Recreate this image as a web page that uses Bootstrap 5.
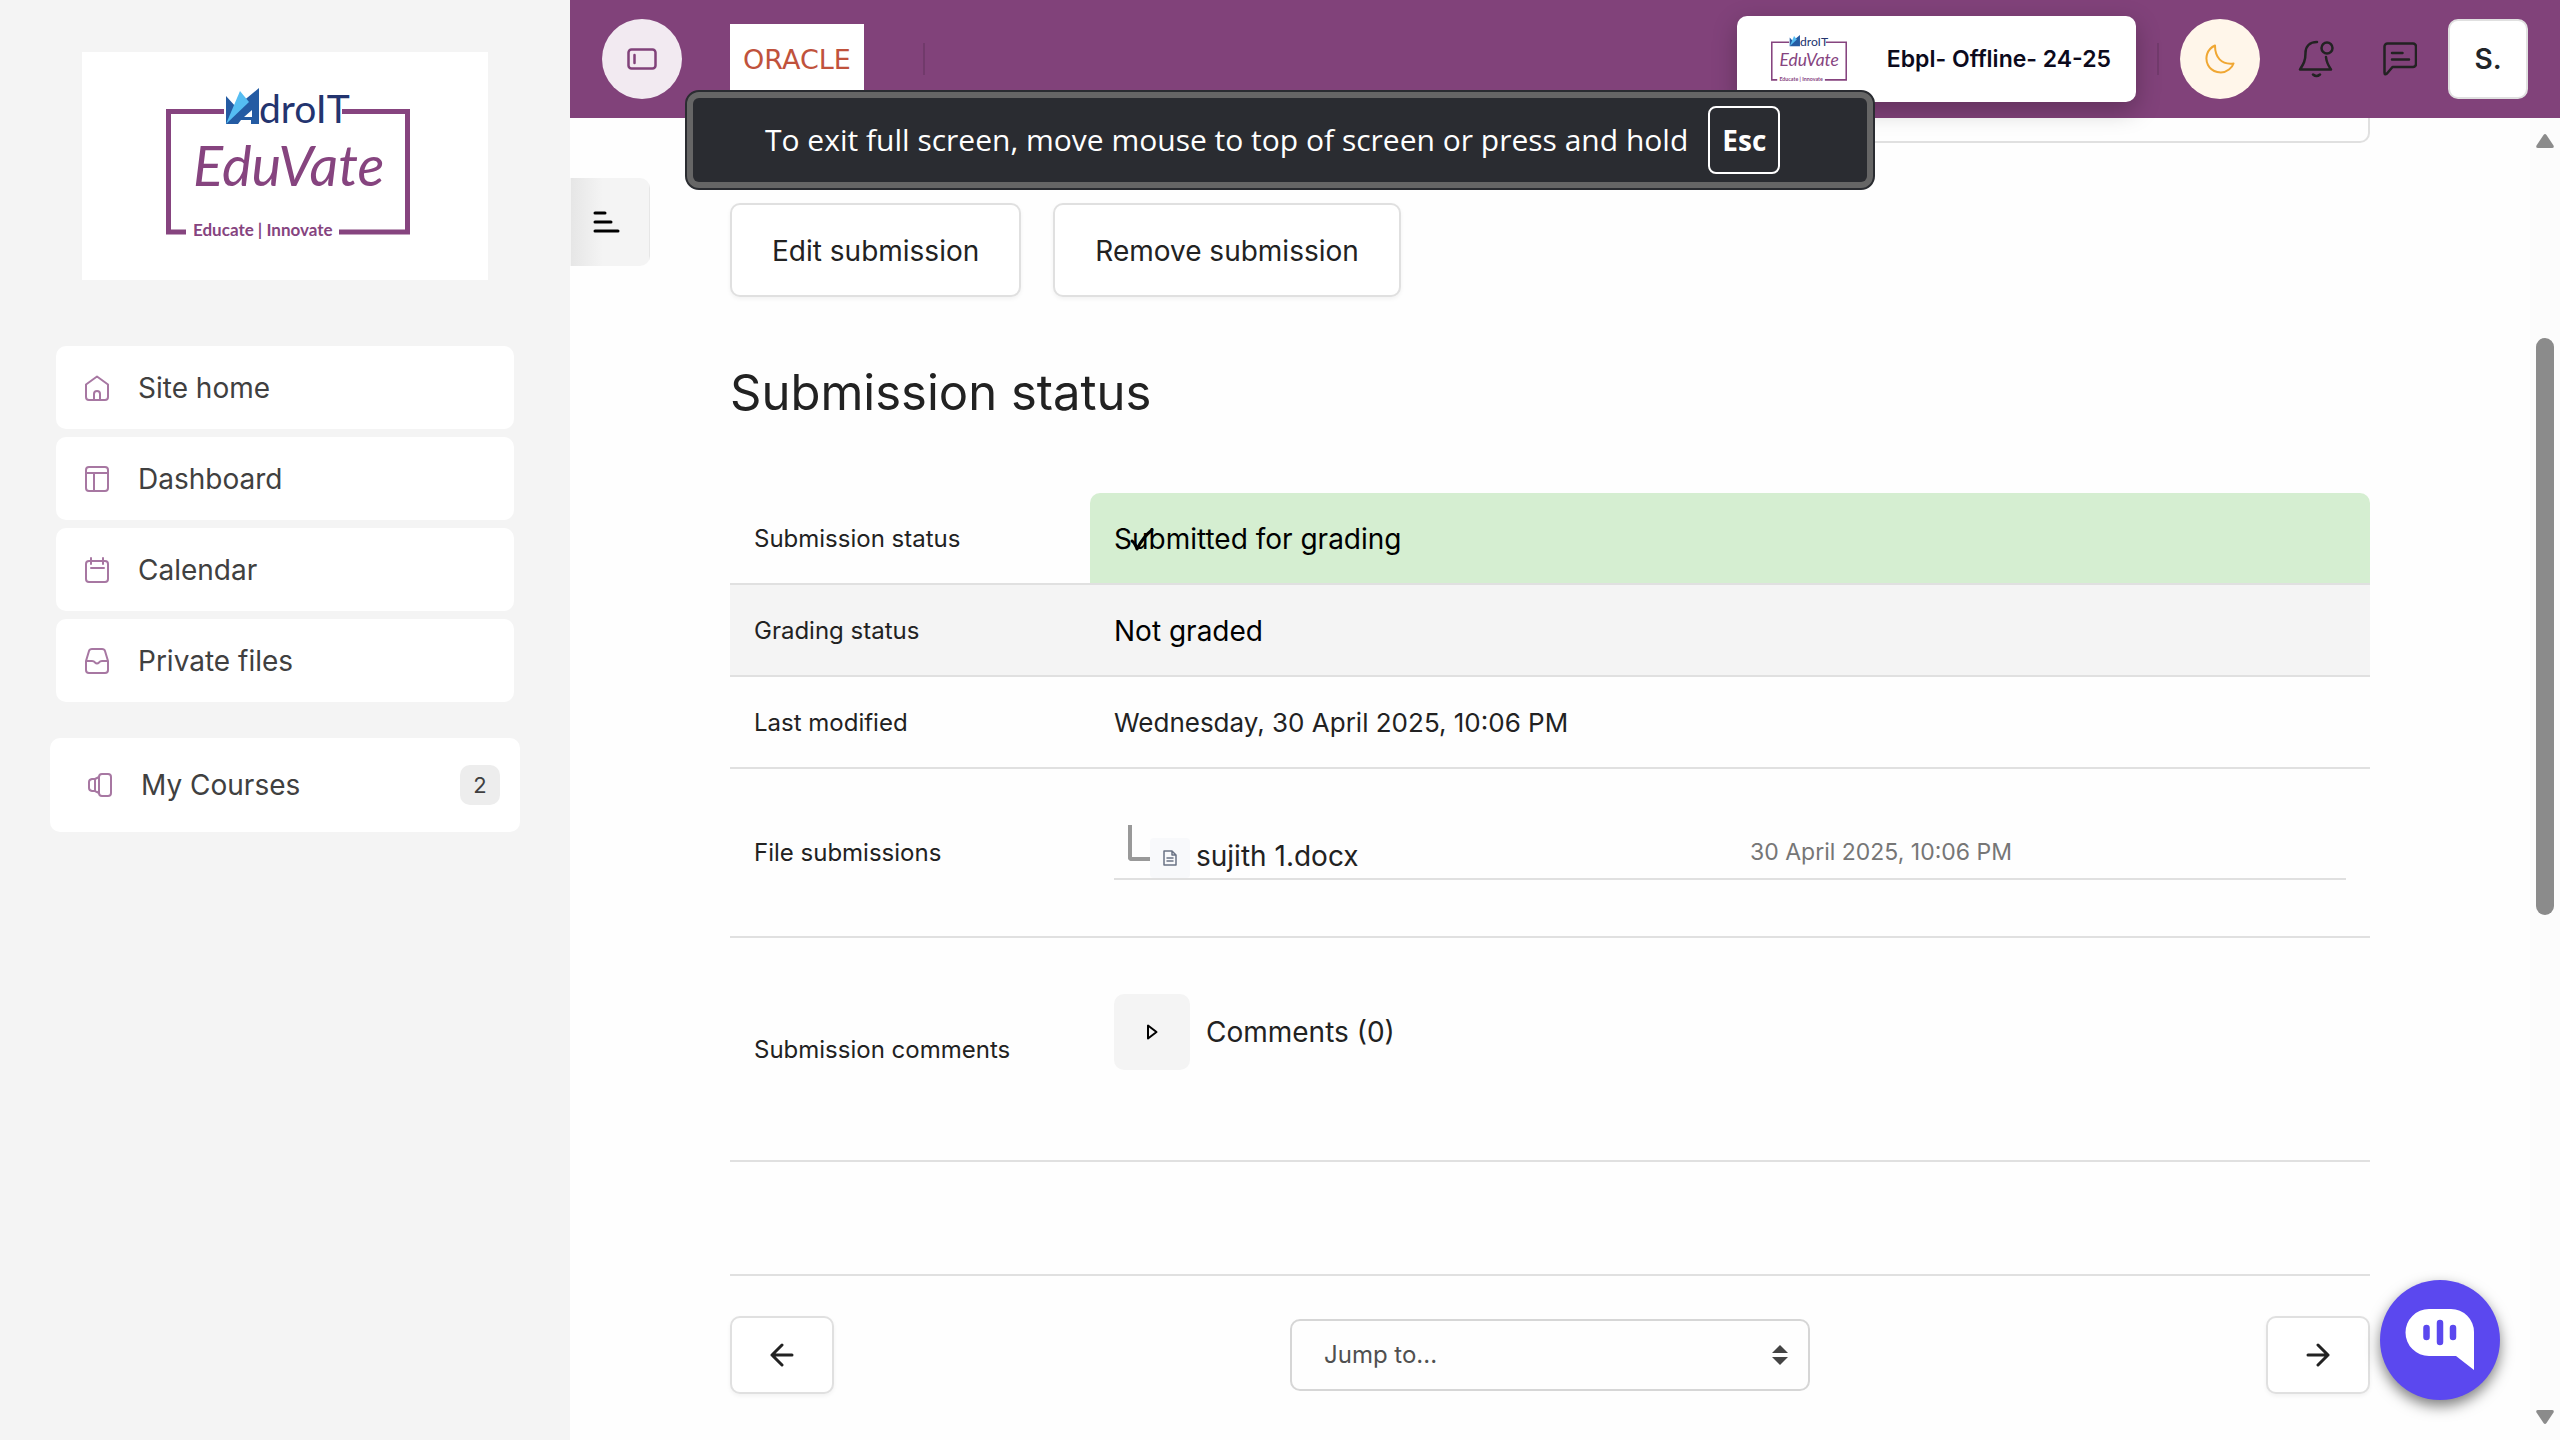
<!DOCTYPE html>
<html lang="en">
<head>
<meta charset="utf-8">
<meta name="viewport" content="width=device-width, initial-scale=1">
<title>Submission status</title>
<link href="https://cdn.jsdelivr.net/npm/bootstrap@5.3.0/dist/css/bootstrap.min.css" rel="stylesheet">
<style>
  body { font-family: Inter, "Noto Sans", sans-serif; font-size: 28px; line-height: 36px; color: #222; background: #fefefe; }
  a { color: inherit; text-decoration: none; }
  svg { display: block; flex: none; }
  .ico { fill: none; stroke: currentColor; stroke-linecap: round; stroke-linejoin: round; }

  .side { width: 570px; flex: none; background: #f4f4f4; padding: 52px 50px; }
  .brand-box { background: #fff; margin: 0 32px 66px; height: 228px; padding: 36px 0 0 6px; }
  .side-link { height: 83px; border-radius: 10px; background: #fff; color: #404040; padding: 0 29px; gap: 29px; font-size: 28px; }
  .side-link .ico { color: #a777a2; }
  .side-nav { gap: 8px; padding: 0 6px; }
  .side-link.courses { height: 94px; margin-top: 36px; padding: 0 20px 0 38px; }
  .count { width: 40px; height: 40px; border-radius: 10px; background: #ededed; font-size: 22px; line-height: 40px; }
  .logo-name { font: 39px Lato, sans-serif; fill: #23346f; }
  .logo-product { font: italic 56px Lato, sans-serif; fill: #86447f; }
  .logo-motto { font: 700 17px Lato, sans-serif; fill: #86447f; }

  .topbar { height: 118px; background: #81427a; padding: 0 32px; z-index: 2; }
  .round-btn { width: 80px; height: 80px; }
  .toggle-btn { background: #f2eaf1; color: #81427a; }
  .moon-btn { background: #fff6ea; color: #f0a733; margin-right: 20px; }
  .partner { width: 134px; height: 70px; margin: 0 59px 0 48px; background: #fff; color: #c0523c; font: 27px "DejaVu Sans", sans-serif; }
  .rule { width: 2px; height: 32px; background: #713a6b; }
  .rule.spaced { margin: 0 21px; }
  .site-card { height: 86px; width: 399px; padding: 0 25px 0 34px; border-radius: 10px; background: #fff; color: #0c0a1c; font-size: 23px; font-weight: 600; box-shadow: 0 8px 24px rgba(0,0,0,.25); }
  .icon-group { gap: 12px; }
  .icon-btn { width: 72px; height: 80px; color: #222; }
  .user-btn { width: 80px; height: 80px; border: 2px solid #e0e0e0; border-radius: 10px; background: #fff; font-size: 28px; font-weight: 600; }

  .drawer-tab { width: 80px; height: 88px; margin-top: 60px; border-radius: 0 10px 10px 0; background: linear-gradient(90deg, #e6e6e6, #f4f4f4 32px); padding-left: 22px; color: #000; }
  .content { padding: 0 160px 0 80px; min-width: 0; }
  .prev-card { height: 25px; border: 2px solid #e0e0e0; border-top: 0; border-radius: 0 0 10px 10px; margin-bottom: 60px; }
  .button-row { gap: 32px; }
  .plain-btn { border: 2px solid #e0e0e0; border-radius: 10px; background: #fff; color: #222; box-shadow: 0 2px 4px rgba(0,0,0,.05); }
  .plain-btn.wide-pad { height: 94px; padding: 2px 40px 0; font-size: 28px; }
  .plain-btn.arrow { width: 104px; height: 78px; }
  h1 { font-size: 49px; line-height: 58px; font-weight: 400; margin: 67px 0 71px; }

  .status-table { width: 100%; border-collapse: separate; border-spacing: 0; }
  .status-table th, .status-table td { height: 92px; padding: 2px 24px 0; border-bottom: 2px solid #e0e0e0; vertical-align: middle; }
  .status-table th { width: 360px; font-weight: 400; font-size: 24px; }
  .status-table .tall > * { height: 169px; padding-top: 0; }
  .status-table .taller > * { height: 224px; }
  .status-table .taller td { vertical-align: top; padding-top: 56px; }
  .status-table .shade > * { background: #f4f4f4; }
  .status-table .dark-text { color: #000; }
  .status-table .when { font-size: 26px; }
  .status-table .done { background: #d5eed1; background-clip: padding-box; border-radius: 10px 10px 0 0; color: #000; position: relative; }
  .tick { position: absolute; left: 40px; top: 35px; }

  .file-line { height: 55px; border-bottom: 2px solid #e0e0e0; }
  .elbow { width: 22px; height: 36px; margin-left: 14px; border: solid #999; border-width: 0 0 4px 4px; border-radius: 0 0 0 4px; }
  .file-ico { width: 40px; height: 40px; border-radius: 4px; background: #f8f9fb; color: #6a7385; margin-right: 6px; }
  .file-date { padding-left: 20px; font-size: 23px; color: #767676; }
  .fold { width: 76px; height: 76px; border-radius: 10px; background: #f4f4f4; color: #000; }

  .end-rule { height: 2px; margin: 112px 0 40px; background: #e0e0e0; }
  .jump { width: 520px; height: 72px; padding: 0 32px; appearance: none; border: 2px solid #d6d6d6; border-radius: 10px; background: #fefefe; color: #505050; font-size: 24px; }
  .jump-arrows { position: absolute; right: 22px; top: 26px; pointer-events: none; }

  .scroll-rail { width: 30px; background: #fcfcfc; padding: 16px 6px; color: #8b8b8b; }
  .scroll-thumb { width: 18px; height: 577px; margin-top: 190px; border-radius: 9px; background: #8b8b8b; }

  .fs-note { top: 90px; height: 100px; width: 1190px; z-index: 5; border: 2px solid #2a2c31; border-radius: 14px; background: #666; padding: 6px; color: #fff; font-family: "Open Sans", sans-serif; font-size: 30px; }
  .fs-inner { background: #2a2c31; border-radius: 6px; gap: 20px; padding-left: 72px; white-space: nowrap; }
  .fs-inner kbd { width: 72px; height: 68px; padding: 0; border: 2px solid #fff; border-radius: 8px; background: none; font: 700 28px/64px "Open Sans", sans-serif; }
  .chat-fab { right: 60px; bottom: 40px; width: 120px; height: 120px; z-index: 4; background: #5b48ef; box-shadow: 0 6px 14px rgba(0,0,0,.5); }
</style>
</head>
<body>
<div class="d-flex min-vh-100">
  <aside class="side">
    <a href="#" class="brand-box d-flex justify-content-center align-items-start" aria-label="AdroIT EduVate">
      <svg width="244" height="154" viewBox="0 0 244 154">
        <path d="M58 23.500H2.500V144H20M173 144h68.500V23.500H176" fill="none" stroke="#86447f" stroke-width="5"/>
        <path d="M60 8l10 11L93 0v36H60z" fill="#245ba3"/>
        <path d="M60 36L74 3l9 11z" fill="#55bdf2"/>
        <path d="M78 29l8-7v7zM72 36l3-4h10v4z" fill="#fff"/>
        <text class="logo-name" x="93" y="35">droIT</text>
        <text class="logo-product" x="27" y="98">EduVate</text>
        <text class="logo-motto" x="27" y="148">Educate | Innovate</text>
      </svg>
    </a>
    <nav class="side-nav d-flex flex-column">
      <a href="#" class="side-link d-flex align-items-center"><svg class="ico" width="24" height="26" viewBox="0 0 24 26" stroke-width="2"><path d="M1 9.500L12 1.500l11 8V22a3 3 0 0 1-3 3H4a3 3 0 0 1-3-3zM9 25v-6a3 3 0 0 1 6 0v6"/></svg>Site home</a>
      <a href="#" class="side-link d-flex align-items-center"><svg class="ico" width="24" height="26" viewBox="0 0 24 26" stroke-width="2"><rect x="1" y="1" width="22" height="24" rx="3"/><path d="M1 7h22M9 7v18"/></svg>Dashboard</a>
      <a href="#" class="side-link d-flex align-items-center"><svg class="ico" width="24" height="26" viewBox="0 0 24 26" stroke-width="2"><rect x="1" y="4" width="22" height="21" rx="3"/><path d="M6 1v6M18 1v6M6 11h13"/></svg>Calendar</a>
      <a href="#" class="side-link d-flex align-items-center"><svg class="ico" width="24" height="26" viewBox="0 0 24 26" stroke-width="2"><path d="M1 13L4 3q.6-2 3-2h10q2.400 0 3 2l3 10v9a3 3 0 0 1-3 3H4a3 3 0 0 1-3-3zM1 13h6q2 0 3 1.500 2 2 4 0Q15 13 17 13h6"/></svg>Private files</a>
    </nav>
    <a href="#" class="side-link courses d-flex align-items-center"><svg class="ico" width="24" height="24" viewBox="0 0 24 24" stroke-width="2"><rect x="11" y="1" width="12" height="22" rx="3"/><path d="M11 4L7 6v12l4 2M6 6H4Q1 6.500 1 9v6q0 2.500 3 3h2"/></svg>My Courses<span class="count text-center ms-auto">2</span></a>
  </aside>

  <div class="flex-grow-1 d-flex flex-column">
    <header class="topbar d-flex align-items-center position-relative">
      <button class="btn round-btn toggle-btn rounded-circle p-0 d-flex justify-content-center align-items-center" aria-label="Toggle sidebar"><svg class="ico" width="30" height="22" viewBox="0 0 30 22" stroke-width="2.500"><rect x="1.500" y="1.500" width="27" height="19" rx="3"/><path d="M7.500 7v8"/></svg></button>
      <a href="#" class="partner d-flex justify-content-center align-items-center">ORACLE</a>
      <div class="rule"></div>
      <a href="#" class="site-card d-flex align-items-center justify-content-between ms-auto">
        <svg width="76" height="48" viewBox="0 0 244 154">
          <path d="M58 23.500H2.500V144H20M173 144h68.500V23.500H176" fill="none" stroke="#86447f" stroke-width="5"/>
          <path d="M60 8l10 11L93 0v36H60z" fill="#245ba3"/>
          <path d="M60 36L74 3l9 11z" fill="#55bdf2"/>
          <text class="logo-name" x="93" y="35">droIT</text>
          <text class="logo-product" x="27" y="98">EduVate</text>
          <text class="logo-motto" x="27" y="148">Educate | Innovate</text>
        </svg>
        Ebpl- Offline- 24-25</a>
      <div class="rule spaced"></div>
      <button class="btn round-btn moon-btn rounded-circle p-0 d-flex justify-content-center align-items-center" aria-label="Dark mode"><svg class="ico" width="30" height="30" viewBox="0 0 30 30" stroke-width="2"><path d="M10 1.500C2 5 -.5 14 3 21s14 10 21 4.500q3.500-2.500 4.500-6C16 21 10 13 10 1.500z"/></svg></button>
      <div class="icon-group d-flex">
        <button class="btn icon-btn p-0 d-flex justify-content-center align-items-center" aria-label="Notifications"><svg class="ico" width="36" height="38" viewBox="0 0 36 38" stroke-width="2.500"><path d="M19 2C11 2 7.500 7 7.500 13c0 8-2 11-5.500 16.500h31C30 25 28.500 23 28 17M15 34.500q3.500 3 7 0"/><circle cx="29" cy="8" r="5.500"/></svg></button>
        <button class="btn icon-btn p-0 d-flex justify-content-center align-items-center" aria-label="Messages"><svg class="ico" width="34" height="34" viewBox="0 0 34 34" stroke-width="2.500"><path d="M4.500 1.500H30a3 3 0 0 1 3 3V22a3 3 0 0 1-3 3H9.500L4 31.500q-2.500 2-2.500-1v-26a3 3 0 0 1 3-3zM9 11h10.500M9 17.500h17"/></svg></button>
        <button class="btn user-btn p-0">S.</button>
      </div>
    </header>

    <div class="flex-grow-1 d-flex">
      <button class="btn drawer-tab d-flex align-items-center flex-shrink-0" aria-label="Open course index"><svg class="ico" width="28" height="24" viewBox="0 0 28 24" stroke-width="3"><path d="M2 3h10M2 12h16M2 21h23"/></svg></button>
      <main class="content flex-grow-1">
        <div class="prev-card"></div>
        <div class="button-row d-flex">
          <button class="btn plain-btn wide-pad">Edit submission</button>
          <button class="btn plain-btn wide-pad">Remove submission</button>
        </div>
        <h1>Submission status</h1>
        <table class="status-table">
          <tr><th scope="row">Submission status</th><td class="done">Submitted for grading<svg class="ico tick" width="24" height="24" viewBox="0 0 24 24" stroke-width="3"><path d="M2 13q3 2 5 8Q13 9 22 2"/></svg></td></tr>
          <tr class="shade"><th scope="row">Grading status</th><td class="dark-text">Not graded</td></tr>
          <tr><th scope="row">Last modified</th><td class="when">Wednesday, 30 April 2025, 10:06 PM</td></tr>
          <tr class="tall"><th scope="row">File submissions</th><td>
            <div class="file-line d-flex align-items-center">
              <div class="d-flex w-50 h-100">
                <span class="elbow"></span>
                <span class="file-ico d-flex justify-content-center align-items-center align-self-end"><svg class="ico" width="14" height="16" viewBox="0 0 14 16" stroke-width="1.500"><path d="M1 1h8l4 4v10H1zM9 1v4h4M4 8h6M4 11h6"/></svg></span>
                <a href="#" class="align-self-center pt-2">sujith 1.docx</a>
              </div>
              <div class="file-date">30 April 2025, 10:06 PM</div>
            </div></td></tr>
          <tr class="taller"><th scope="row">Submission comments</th><td>
            <div class="d-flex align-items-center gap-3">
              <button class="btn fold p-0 d-flex justify-content-center align-items-center" aria-label="Show comments"><svg class="ico" width="14" height="18" viewBox="0 0 14 18" stroke-width="2"><path d="M3 2.500v13l8.500-6.500z"/></svg></button>
              <a href="#">Comments (0)</a>
            </div></td></tr>
        </table>
        <div class="end-rule"></div>
        <div class="d-flex justify-content-between align-items-center">
          <button class="btn plain-btn arrow p-0 d-flex justify-content-center align-items-center" aria-label="Previous activity"><svg class="ico" width="24" height="24" viewBox="0 0 24 24" stroke-width="3"><path d="M22 12H2M12 2L2 12l10 10"/></svg></button>
          <div class="position-relative">
            <select class="jump d-block" aria-label="Jump to"><option>Jump to...</option></select>
            <svg class="jump-arrows" width="16" height="20" viewBox="0 0 16 20" fill="#444"><path d="M8 0l8 8H0zM8 20l8-8H0z"/></svg>
          </div>
          <button class="btn plain-btn arrow p-0 d-flex justify-content-center align-items-center" aria-label="Next activity"><svg class="ico" width="24" height="24" viewBox="0 0 24 24" stroke-width="3"><path d="M2 12h20M12 2l10 10-10 10"/></svg></button>
        </div>
      </main>
      <div class="scroll-rail d-flex flex-column" aria-hidden="true">
        <svg width="18" height="14" viewBox="0 0 18 14" fill="currentColor"><path d="M7.500 1q1.500-2 3 0l7 10.500q1 2.500-1.500 2.500H2Q-.5 14 .5 11.500z"/></svg>
        <div class="scroll-thumb"></div>
        <svg class="mt-auto" width="18" height="14" viewBox="0 0 18 14" fill="currentColor"><path d="M7.500 13q1.500 2 3 0l7-10.500Q18.500 0 16 0H2Q-.5 0 .5 2.500z"/></svg>
      </div>
    </div>
  </div>
</div>

<div class="fs-note position-fixed start-50 translate-middle-x" role="status">
  <div class="fs-inner d-flex align-items-center h-100"><span>To exit full screen, move mouse to top of screen or press and hold</span><kbd class="text-center">Esc</kbd></div>
</div>
<button class="btn chat-fab position-fixed rounded-circle p-0 d-flex justify-content-center align-items-center" aria-label="Chat"><svg width="70" height="62" viewBox="0 0 70 62"><path d="M24 0h22a23 23 0 0 1 23 23v38L51 47H24a23.500 23.500 0 0 1 0-47z" fill="#fff"/><path d="M21.500 19v9M35 14v19M48 19v9" stroke="#5b48ef" stroke-width="6.500" stroke-linecap="round"/></svg></button>
<script src="https://cdn.jsdelivr.net/npm/bootstrap@5.3.0/dist/js/bootstrap.bundle.min.js"></script>
</body>
</html>
